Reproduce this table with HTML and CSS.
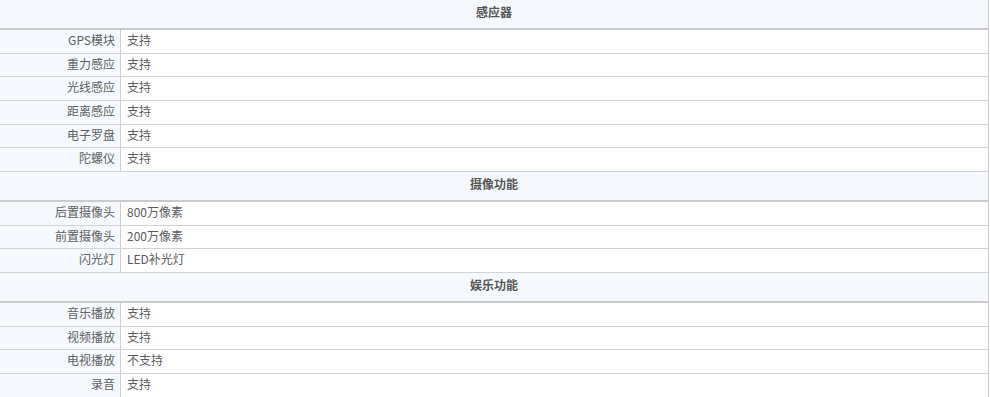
FILE: index.html
```html
<!DOCTYPE html>
<html lang="zh-CN">
<head>
<meta charset="utf-8">
<title>参数</title>
<link rel="stylesheet" href="styles.css">
</head>
<body>
<div class="spec">
  <div class="sec-title">感应器</div>
  <div class="row"><div class="label">GPS模块</div><div class="value">支持</div></div>
  <div class="row"><div class="label">重力感应</div><div class="value">支持</div></div>
  <div class="row"><div class="label">光线感应</div><div class="value">支持</div></div>
  <div class="row"><div class="label">距离感应</div><div class="value">支持</div></div>
  <div class="row"><div class="label">电子罗盘</div><div class="value">支持</div></div>
  <div class="row"><div class="label">陀螺仪</div><div class="value">支持</div></div>
  <div class="sec-title">摄像功能</div>
  <div class="row"><div class="label">后置摄像头</div><div class="value">800万像素</div></div>
  <div class="row"><div class="label">前置摄像头</div><div class="value">200万像素</div></div>
  <div class="row"><div class="label">闪光灯</div><div class="value">LED补光灯</div></div>
  <div class="sec-title">娱乐功能</div>
  <div class="row"><div class="label">音乐播放</div><div class="value">支持</div></div>
  <div class="row"><div class="label">视频播放</div><div class="value">支持</div></div>
  <div class="row"><div class="label">电视播放</div><div class="value">不支持</div></div>
  <div class="row"><div class="label">录音</div><div class="value">支持</div></div>
</div>
</body>
</html>
```
FILE: styles.css
```css
html, body {
  margin: 0;
  padding: 0;
  background: #fff;
}
body {
  font-family: "Noto Sans CJK SC", "Liberation Sans", sans-serif;
  font-size: 12px;
  color: #5c5c5c;
}
.spec {
  width: 989px;
  box-sizing: border-box;
  border-right: 1px solid #cccccc;
}
.sec-title {
  box-sizing: border-box;
  height: 30px;
  line-height: 24px;
  text-align: center;
  font-weight: bold;
  background: #f5f9fd;
  border-bottom: 2px solid #cbcbcb;
  color: #555;
}
.row {
  display: flex;
  box-sizing: border-box;
  height: 23.667px;
  border-bottom: 1px solid #d3d3d3;
}
.row:last-child {
  border-bottom: none;
}
.label {
  box-sizing: border-box;
  flex: 0 0 121px;
  text-align: right;
  padding-right: 5px;
  background: #f5f9fd;
  border-right: 1px solid #cfcfcf;
  line-height: 20px;
  color: #606060;
}
.value {
  flex: 1;
  padding-left: 6px;
  line-height: 20px;
  color: #5c5c5c;
}
```
